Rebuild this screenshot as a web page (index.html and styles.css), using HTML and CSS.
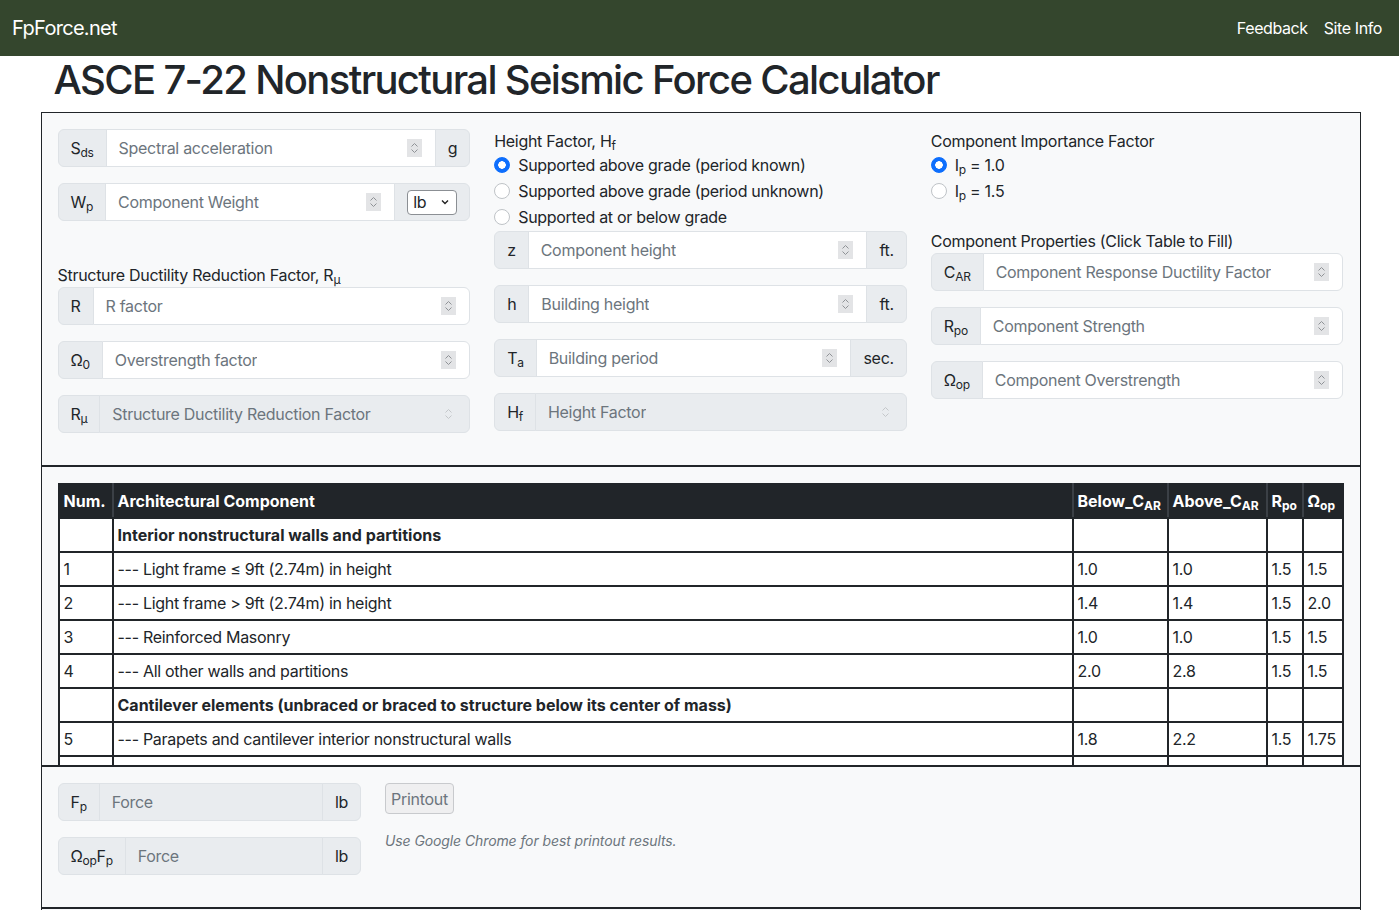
FILE: index.html
```html
<!DOCTYPE html>
<html lang="en">
<head>
<meta charset="utf-8">
<title>FpForce.net</title>
<link rel="stylesheet" href="styles.css">
</head>
<body>
<nav class="navbar">
  <a class="brand" href="#">FpForce.net</a>
  <div class="nav-links">
    <a href="#">Feedback</a>
    <a href="#">Site Info</a>
  </div>
</nav>
<main class="page">
  <h1 class="title">ASCE 7-22 Nonstructural Seismic Force Calculator</h1>

  <section class="panel panel-inputs">
    <div class="col">
      <div class="ig">
        <span class="ig-text">S<sub>ds</sub></span>
        <div class="ig-input"><span class="ph">Spectral acceleration</span><svg class="spin" viewBox="0 0 15 18"><rect width="15" height="18"/><path d="M4.5 7.5 7.5 4.5 10.5 7.5M4.5 10.5 7.5 13.5 10.5 10.5"/></svg></div>
        <span class="ig-text">g</span>
      </div>
      <div class="ig">
        <span class="ig-text">W<sub>p</sub></span>
        <div class="ig-input"><span class="ph">Component Weight</span><svg class="spin" viewBox="0 0 15 18"><rect width="15" height="18"/><path d="M4.5 7.5 7.5 4.5 10.5 7.5M4.5 10.5 7.5 13.5 10.5 10.5"/></svg></div>
        <div class="ig-select">
          <div class="select"><span>lb</span><svg class="sel-chev" viewBox="0 0 10 6"><path d="M2 1.5 5 4.5 8 1.5"/></svg></div>
        </div>
      </div>
      <div class="label label-gap">Structure Ductility Reduction Factor, R<sub>μ</sub></div>
      <div class="ig">
        <span class="ig-text">R</span>
        <div class="ig-input"><span class="ph">R factor</span><svg class="spin" viewBox="0 0 15 18"><rect width="15" height="18"/><path d="M4.5 7.5 7.5 4.5 10.5 7.5M4.5 10.5 7.5 13.5 10.5 10.5"/></svg></div>
      </div>
      <div class="ig">
        <span class="ig-text">Ω<sub>0</sub></span>
        <div class="ig-input"><span class="ph">Overstrength factor</span><svg class="spin" viewBox="0 0 15 18"><rect width="15" height="18"/><path d="M4.5 7.5 7.5 4.5 10.5 7.5M4.5 10.5 7.5 13.5 10.5 10.5"/></svg></div>
      </div>
      <div class="ig">
        <span class="ig-text">R<sub>μ</sub></span>
        <div class="ig-input disabled"><span class="ph">Structure Ductility Reduction Factor</span><svg class="spin" viewBox="0 0 15 18"><rect width="15" height="18"/><path d="M4.5 7.5 7.5 4.5 10.5 7.5M4.5 10.5 7.5 13.5 10.5 10.5"/></svg></div>
      </div>
    </div>

    <div class="col">
      <div class="label">Height Factor, H<sub>f</sub></div>
      <div class="check"><span class="radio checked"></span><span class="check-label">Supported above grade (period known)</span></div>
      <div class="check"><span class="radio"></span><span class="check-label">Supported above grade (period unknown)</span></div>
      <div class="check"><span class="radio"></span><span class="check-label">Supported at or below grade</span></div>
      <div class="ig">
        <span class="ig-text">z</span>
        <div class="ig-input"><span class="ph">Component height</span><svg class="spin" viewBox="0 0 15 18"><rect width="15" height="18"/><path d="M4.5 7.5 7.5 4.5 10.5 7.5M4.5 10.5 7.5 13.5 10.5 10.5"/></svg></div>
        <span class="ig-text">ft.</span>
      </div>
      <div class="ig">
        <span class="ig-text">h</span>
        <div class="ig-input"><span class="ph">Building height</span><svg class="spin" viewBox="0 0 15 18"><rect width="15" height="18"/><path d="M4.5 7.5 7.5 4.5 10.5 7.5M4.5 10.5 7.5 13.5 10.5 10.5"/></svg></div>
        <span class="ig-text">ft.</span>
      </div>
      <div class="ig">
        <span class="ig-text">T<sub>a</sub></span>
        <div class="ig-input"><span class="ph">Building period</span><svg class="spin" viewBox="0 0 15 18"><rect width="15" height="18"/><path d="M4.5 7.5 7.5 4.5 10.5 7.5M4.5 10.5 7.5 13.5 10.5 10.5"/></svg></div>
        <span class="ig-text">sec.</span>
      </div>
      <div class="ig">
        <span class="ig-text">H<sub>f</sub></span>
        <div class="ig-input disabled"><span class="ph">Height Factor</span><svg class="spin" viewBox="0 0 15 18"><rect width="15" height="18"/><path d="M4.5 7.5 7.5 4.5 10.5 7.5M4.5 10.5 7.5 13.5 10.5 10.5"/></svg></div>
      </div>
    </div>

    <div class="col">
      <div class="label">Component Importance Factor</div>
      <div class="check"><span class="radio checked"></span><span class="check-label">I<sub>p</sub> = 1.0</span></div>
      <div class="check"><span class="radio"></span><span class="check-label">I<sub>p</sub> = 1.5</span></div>
      <div class="label label-gap2">Component Properties (Click Table to Fill)</div>
      <div class="ig">
        <span class="ig-text">C<sub>AR</sub></span>
        <div class="ig-input"><span class="ph">Component Response Ductility Factor</span><svg class="spin" viewBox="0 0 15 18"><rect width="15" height="18"/><path d="M4.5 7.5 7.5 4.5 10.5 7.5M4.5 10.5 7.5 13.5 10.5 10.5"/></svg></div>
      </div>
      <div class="ig">
        <span class="ig-text">R<sub>po</sub></span>
        <div class="ig-input"><span class="ph">Component Strength</span><svg class="spin" viewBox="0 0 15 18"><rect width="15" height="18"/><path d="M4.5 7.5 7.5 4.5 10.5 7.5M4.5 10.5 7.5 13.5 10.5 10.5"/></svg></div>
      </div>
      <div class="ig">
        <span class="ig-text">Ω<sub>op</sub></span>
        <div class="ig-input"><span class="ph">Component Overstrength</span><svg class="spin" viewBox="0 0 15 18"><rect width="15" height="18"/><path d="M4.5 7.5 7.5 4.5 10.5 7.5M4.5 10.5 7.5 13.5 10.5 10.5"/></svg></div>
      </div>
    </div>
  </section>

  <section class="panel panel-table">
    <table class="ctable">
      <colgroup>
        <col class="c-num"><col><col class="c-below"><col class="c-above"><col class="c-rpo"><col class="c-oop">
      </colgroup>
      <thead>
        <tr><th>Num.</th><th>Architectural Component</th><th>Below_C<sub>AR</sub></th><th>Above_C<sub>AR</sub></th><th>R<sub>po</sub></th><th>Ω<sub>op</sub></th></tr>
      </thead>
      <tbody>
        <tr><td></td><td class="grp">Interior nonstructural walls and partitions</td><td></td><td></td><td></td><td></td></tr>
        <tr><td>1</td><td>--- Light frame ≤ 9ft (2.74m) in height</td><td>1.0</td><td>1.0</td><td>1.5</td><td>1.5</td></tr>
        <tr><td>2</td><td>--- Light frame &gt; 9ft (2.74m) in height</td><td>1.4</td><td>1.4</td><td>1.5</td><td>2.0</td></tr>
        <tr><td>3</td><td>--- Reinforced Masonry</td><td>1.0</td><td>1.0</td><td>1.5</td><td>1.5</td></tr>
        <tr><td>4</td><td>--- All other walls and partitions</td><td>2.0</td><td>2.8</td><td>1.5</td><td>1.5</td></tr>
        <tr><td></td><td class="grp">Cantilever elements (unbraced or braced to structure below its center of mass)</td><td></td><td></td><td></td><td></td></tr>
        <tr><td>5</td><td>--- Parapets and cantilever interior nonstructural walls</td><td>1.8</td><td>2.2</td><td>1.5</td><td>1.75</td></tr>
        <tr class="clipped"><td></td><td></td><td></td><td></td><td></td><td></td></tr>
      </tbody>
    </table>
  </section>

  <section class="panel panel-out">
    <div class="out-col">
      <div class="ig">
        <span class="ig-text">F<sub>p</sub></span>
        <div class="ig-input disabled"><span class="ph">Force</span></div>
        <span class="ig-text">lb</span>
      </div>
      <div class="ig">
        <span class="ig-text">Ω<sub>op</sub>F<sub>p</sub></span>
        <div class="ig-input disabled"><span class="ph">Force</span></div>
        <span class="ig-text">lb</span>
      </div>
    </div>
    <div class="print-col">
      <button class="print-btn" type="button">Printout</button>
      <p class="hint">Use Google Chrome for best printout results.</p>
    </div>
  </section>
  <section class="panel panel-end"></section>
</main>
</body>
</html>
```

FILE: styles.css
```css
* { box-sizing: border-box; }

body {
  margin: 0;
  padding-left: 2px;
  font-family: Inter, "Noto Sans", "Liberation Sans", sans-serif;
  font-size: 16px;
  line-height: 1.5;
  letter-spacing: -0.29px;
  color: #212529;
  background: #fff;
}

sub {
  font-size: 0.75em;
  line-height: 0;
  vertical-align: -0.25em;
}

.navbar {
  height: 56px;
  margin-left: -2px;
  background: #34462d;
  display: flex;
  align-items: center;
  justify-content: space-between;
  padding: 0 9px 0 12px;
}
.brand {
  color: #fff;
  font-size: 20px;
  letter-spacing: -0.7px;
  text-decoration: none;
}
.nav-links { display: flex; }
.nav-links a {
  color: #fff;
  text-decoration: none;
  padding: 0 8px;
  letter-spacing: -0.4px;
}

.page {
  width: 1320px;
  margin: 0 auto;
}
.title {
  font-size: 40px;
  font-weight: 500;
  line-height: 1.2;
  letter-spacing: -1.65px;
  margin: 0 0 8px;
  padding-left: 13px;
}

.panel {
  border: 1px solid #212529;
  background: #f8f9fa;
}

.panel-inputs {
  padding: 16px;
  display: grid;
  grid-template-columns: repeat(3, 1fr);
  column-gap: 24px;
}
.col { display: flex; flex-direction: column; }

.label { line-height: 24px; }
.label-gap { margin-top: 26px; }
.label-gap2 { margin-top: 24px; }

.check {
  display: flex;
  align-items: center;
  height: 24px;
  margin-bottom: 2px;
}
.check-label { line-height: 24px; }
.radio {
  width: 16px;
  height: 16px;
  border-radius: 50%;
  border: 1px solid #bfc3c7;
  background: #fff;
  margin-right: 8px;
  flex: none;
}
.radio.checked {
  border-color: #0d6efd;
  background: radial-gradient(circle, #fff 0 3.5px, #0d6efd 4px);
}

.ig {
  display: flex;
  height: 38px;
  margin-bottom: 16px;
}
.ig-text {
  display: block;
  line-height: 36px;
  padding: 0 12px;
  background: #e9ecef;
  border: 1px solid #dee2e6;
  white-space: nowrap;
}
.ig > :first-child { border-radius: 6px 0 0 6px; }
.ig > :last-child { border-radius: 0 6px 6px 0; }
.ig > * + * { margin-left: -1px; }

.ig-input {
  flex: 1;
  min-width: 0;
  display: flex;
  align-items: center;
  justify-content: space-between;
  padding: 0 13px 0 12px;
  background: #fff;
  border: 1px solid #dee2e6;
}
.ig-input.disabled { background: #e9ecef; }
.ph { color: #6c757d; white-space: nowrap; overflow: hidden; }

.spin {
  width: 15px;
  height: 18px;
  flex: none;
}
.spin rect { fill: #e3e4e6; }
.spin path { fill: none; stroke: #8f9296; stroke-width: 1; }
.disabled .spin rect { fill: none; }
.disabled .spin path { stroke: #c4c7ca; }

.ig-select {
  display: flex;
  align-items: center;
  padding: 0 12px;
  background: #e9ecef;
  border: 1px solid #dee2e6;
}
.select {
  width: 50px;
  height: 25px;
  border: 1px solid #8b8f94;
  border-radius: 4px;
  background: #fff;
  display: flex;
  align-items: center;
  justify-content: space-between;
  padding: 0 6px 0 5px;
}
.sel-chev { width: 10px; height: 6px; }
.sel-chev path { fill: none; stroke: #222; stroke-width: 1.4; }

.panel-table {
  height: 300px;
  overflow: hidden;
  padding: 16px 16px 0;
}
.ctable {
  width: 100%;
  border-collapse: collapse;
  table-layout: fixed;
  background: #fff;
}
.c-num { width: 54px; }
.c-below { width: 95px; }
.c-above { width: 99px; }
.c-rpo { width: 36px; }
.c-oop { width: 40px; }

.ctable th, .ctable td {
  border: 2px solid #212529;
  padding: 4px;
  height: 34px;
  text-align: left;
  white-space: nowrap;
  overflow: hidden;
  line-height: 24px;
}
.ctable th {
  background: #212529;
  color: #fff;
  font-weight: 700;
  letter-spacing: 0;
  border-left-color: #3b4046;
  border-right-color: #3b4046;
}
.ctable th:first-child { border-left-color: #212529; }
.ctable th:last-child { border-right-color: #212529; }
.grp { font-weight: 700; letter-spacing: 0; }

.panel-out {
  padding: 16px;
  display: grid;
  grid-template-columns: repeat(4, 1fr);
  column-gap: 24px;
}
.print-col { grid-column: span 3; }
.print-btn {
  font-family: inherit;
  font-size: 16px;
  letter-spacing: -0.29px;
  color: #6c757d;
  background: #efeff0;
  border: 1px solid #c8cacd;
  border-radius: 4px;
  height: 31px;
  padding: 0 5px;
}
.hint {
  margin: 16px 0 0;
  font-size: 14px;
  font-style: italic;
  letter-spacing: -0.1px;
  color: #6c757d;
  line-height: 21px;
}

.panel-end {
  height: 10px;
  border-bottom: 0;
}
```
